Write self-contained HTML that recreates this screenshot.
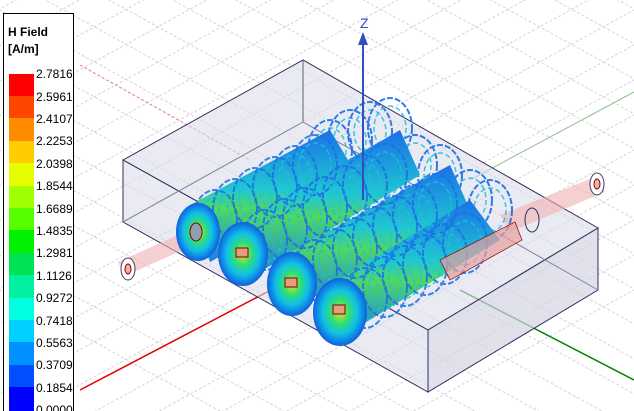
<!DOCTYPE html><html><head><style>html,body{margin:0;background:#fff;overflow:hidden;width:634px;height:411px}svg{display:block}</style></head><body>
<svg width="634" height="411" viewBox="0 0 634 411" xmlns="http://www.w3.org/2000/svg" font-family="Liberation Sans, sans-serif">
<defs>
<radialGradient id="cg" cx="50%" cy="50%" r="50%"><stop offset="0" stop-color="#e8e020"/><stop offset="0.35" stop-color="#30e070"/><stop offset="0.65" stop-color="#10c0e8"/><stop offset="1" stop-color="#1060e0"/></radialGradient>
<linearGradient id="band" x1="0" y1="0" x2="0" y2="1"><stop offset="0" stop-color="#1a70e8"/><stop offset="0.45" stop-color="#20c8d0"/><stop offset="0.6" stop-color="#50d860"/><stop offset="1" stop-color="#1a80e8"/></linearGradient>
<g id="ring"><ellipse cx="0" cy="0" rx="22" ry="30" fill="none" stroke="#1a70e8" stroke-width="2" stroke-dasharray="6,2"/><ellipse cx="0" cy="0" rx="16" ry="22" fill="none" stroke="#20c0e0" stroke-width="1.5" stroke-dasharray="5,3"/></g>
</defs>
<g stroke="#d4d4dc" stroke-width="1" stroke-dasharray="3,2">
<g id="ga">
<line x1="-400" y1="0" x2="900" y2="715"/><line x1="-400" y1="-35" x2="900" y2="680"/><line x1="-400" y1="-70" x2="900" y2="645"/><line x1="-400" y1="-105" x2="900" y2="610"/><line x1="-400" y1="-140" x2="900" y2="575"/><line x1="-400" y1="-175" x2="900" y2="540"/><line x1="-400" y1="-210" x2="900" y2="505"/><line x1="-400" y1="-245" x2="900" y2="470"/><line x1="-400" y1="-280" x2="900" y2="435"/><line x1="-400" y1="-315" x2="900" y2="400"/><line x1="-400" y1="-350" x2="900" y2="365"/><line x1="-400" y1="-385" x2="900" y2="330"/><line x1="-400" y1="-420" x2="900" y2="295"/><line x1="-400" y1="-455" x2="900" y2="260"/><line x1="-400" y1="-490" x2="900" y2="225"/><line x1="-400" y1="-525" x2="900" y2="190"/><line x1="-400" y1="-560" x2="900" y2="155"/><line x1="-400" y1="-595" x2="900" y2="120"/><line x1="-400" y1="-630" x2="900" y2="85"/><line x1="-400" y1="-665" x2="900" y2="50"/><line x1="-400" y1="-700" x2="900" y2="15"/><line x1="-400" y1="35" x2="900" y2="750"/><line x1="-400" y1="70" x2="900" y2="785"/>
</g>
<use href="#ga" transform="translate(634,0) scale(-1,1)"/>
</g>
<line x1="80" y1="390" x2="290" y2="280" stroke="#e00000" stroke-width="1.5"/>
<line x1="80" y1="65" x2="250" y2="160" stroke="#e08080" stroke-width="1" stroke-dasharray="3,2"/>
<line x1="460" y1="290" x2="634" y2="380" stroke="#008000" stroke-width="1.5"/>
<line x1="470" y1="180" x2="634" y2="92" stroke="#90c090" stroke-width="1"/>
<polygon points="123,160 303,60 598,228 428,330" fill="#dcdcea" fill-opacity="0.6" stroke="#303060" stroke-width="1"/>
<polygon points="123,160 428,330 428,392 123,222" fill="#dcdcea" fill-opacity="0.6" stroke="#303060" stroke-width="1"/>
<polygon points="428,330 598,228 598,290 428,392" fill="#d4d4e4" fill-opacity="0.7" stroke="#303060" stroke-width="1"/>
<line x1="303" y1="60" x2="303" y2="122" stroke="#606080"/><line x1="303" y1="122" x2="123" y2="222" stroke="#8080a0"/><line x1="303" y1="122" x2="598" y2="290" stroke="#8080a0"/>
<polygon points="118,262 200,225 205,240 125,276" fill="#f0b0b0" fill-opacity="0.6"/>
<polygon points="500,215 600,175 605,192 510,232" fill="#f0b0b0" fill-opacity="0.6"/>
<ellipse cx="128" cy="269" rx="7" ry="11" fill="#fff" stroke="#404060"/><ellipse cx="128" cy="269" rx="3" ry="5" fill="#f0b0b0" stroke="#800"/>
<ellipse cx="597" cy="184" rx="7" ry="11" fill="#fff" stroke="#404060"/><ellipse cx="597" cy="184" rx="3" ry="5" fill="#f0b0b0" stroke="#800"/>
<!-- back rings -->
<g opacity="0.9">
<use href="#ring" x="330" y="150"/><use href="#ring" x="350" y="140"/><use href="#ring" x="370" y="132"/><use href="#ring" x="390" y="128"/><use href="#ring" x="415" y="165"/><use href="#ring" x="440" y="175"/><use href="#ring" x="470" y="200"/><use href="#ring" x="490" y="210"/>
</g>
<g>
<polygon points="190,205 330,130 360,180 210,262" fill="url(#band)"/>
<polygon points="235,225 400,130 420,175 255,275" fill="url(#band)"/>
<polygon points="285,255 450,165 470,210 300,305" fill="url(#band)"/>
<polygon points="330,285 470,200 500,240 345,335" fill="url(#band)"/>
</g>
<g opacity="0.85">
<use href="#ring" x="215" y="220"/><use href="#ring" x="235" y="209"/><use href="#ring" x="255" y="198"/><use href="#ring" x="275" y="187"/><use href="#ring" x="295" y="176"/><use href="#ring" x="315" y="165"/>
<use href="#ring" x="265" y="240"/><use href="#ring" x="285" y="229"/><use href="#ring" x="305" y="218"/><use href="#ring" x="325" y="207"/><use href="#ring" x="345" y="196"/><use href="#ring" x="365" y="185"/><use href="#ring" x="385" y="174"/>
<use href="#ring" x="315" y="270"/><use href="#ring" x="335" y="259"/><use href="#ring" x="355" y="248"/><use href="#ring" x="375" y="237"/><use href="#ring" x="395" y="226"/><use href="#ring" x="415" y="215"/><use href="#ring" x="435" y="204"/>
<use href="#ring" x="365" y="298"/><use href="#ring" x="385" y="287"/><use href="#ring" x="405" y="276"/><use href="#ring" x="425" y="265"/><use href="#ring" x="445" y="254"/><use href="#ring" x="465" y="243"/>
</g>
<ellipse cx="198" cy="232" rx="22" ry="29" fill="url(#cg)"/>
<ellipse cx="243" cy="254" rx="25" ry="32" fill="url(#cg)"/>
<ellipse cx="292" cy="284" rx="25" ry="32" fill="url(#cg)"/>
<ellipse cx="340" cy="312" rx="27" ry="34" fill="url(#cg)"/>
<g fill="#e0a080" stroke="#800000" stroke-width="1">
<rect x="236" y="248" width="12" height="9"/><rect x="285" y="278" width="12" height="9"/><rect x="333" y="305" width="12" height="9"/>
</g>
<ellipse cx="196" cy="232" rx="6" ry="9" fill="#90a0b0" stroke="#800"/>
<polygon points="440,260 515,222 522,240 450,280" fill="#e8a0a0" fill-opacity="0.7" stroke="#800" stroke-width="0.7"/>
<ellipse cx="532" cy="220" rx="7" ry="12" fill="none" stroke="#303060"/>
<line x1="363" y1="40" x2="363" y2="200" stroke="#3050c0" stroke-width="2"/>
<polygon points="358,45 363,32 368,45" fill="#3050c0"/>
<text x="360" y="28" font-size="14" fill="#3050c0">Z</text>
<rect x="3.5" y="13.5" width="70" height="400" fill="#fff" stroke="#000"/>
<text x="8" y="36" font-size="12" font-weight="bold">H Field</text>
<text x="8" y="53" font-size="12" font-weight="bold">[A/m]</text>
<g>
<rect x="9" y="74" width="25" height="23" fill="#ff0000"/><rect x="9" y="96" width="25" height="23" fill="#ff4600"/><rect x="9" y="118" width="25" height="23" fill="#ff8c00"/><rect x="9" y="141" width="25" height="23" fill="#ffcc00"/><rect x="9" y="163" width="25" height="23" fill="#e6ff00"/><rect x="9" y="186" width="25" height="23" fill="#a0ff00"/><rect x="9" y="208" width="25" height="23" fill="#55ff00"/><rect x="9" y="230" width="25" height="23" fill="#00f000"/><rect x="9" y="253" width="25" height="23" fill="#00e055"/><rect x="9" y="275" width="25" height="23" fill="#00f0a0"/><rect x="9" y="298" width="25" height="23" fill="#00ffe0"/><rect x="9" y="320" width="25" height="23" fill="#00d0ff"/><rect x="9" y="342" width="25" height="23" fill="#0090ff"/><rect x="9" y="365" width="25" height="23" fill="#0050ff"/><rect x="9" y="387" width="25" height="24" fill="#0000ff"/>
</g>
<g font-size="12" fill="#000">
<text x="36" y="78">2.7816</text><text x="36" y="101">2.5961</text><text x="36" y="123">2.4107</text><text x="36" y="145">2.2253</text><text x="36" y="168">2.0398</text><text x="36" y="190">1.8544</text><text x="36" y="213">1.6689</text><text x="36" y="235">1.4835</text><text x="36" y="257">1.2981</text><text x="36" y="280">1.1126</text><text x="36" y="302">0.9272</text><text x="36" y="325">0.7418</text><text x="36" y="347">0.5563</text><text x="36" y="369">0.3709</text><text x="36" y="392">0.1854</text><text x="36" y="414">0.0000</text>
</g>
</svg>
</body></html>
